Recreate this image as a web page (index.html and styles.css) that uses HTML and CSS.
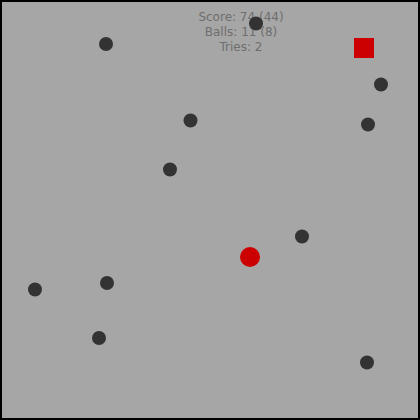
FILE: index.html
```html
<!DOCTYPE html>
<html lang="en">

<head>
  <meta charset="UTF-8" />
  <title>Balls</title>
  <link rel="stylesheet" href="styles.css">
</head>

<body>
  <div class="board">
    <svg class="field" width="416" height="416" viewBox="2 2 416 416">
      <g class="hud">
        <text x="241" y="21">Score: 74 (44)</text>
        <text x="241" y="36">Balls: 11 (8)</text>
        <text x="241" y="51">Tries: 2</text>
      </g>
      <g class="balls">
        <circle cx="256" cy="23.5" r="7" />
        <circle cx="106" cy="44" r="7" />
        <circle cx="381" cy="84.5" r="7" />
        <circle cx="368" cy="124.5" r="7" />
        <circle cx="190.5" cy="120.5" r="7" />
        <circle cx="170" cy="169.5" r="7" />
        <circle cx="302" cy="236.5" r="7" />
        <circle cx="107" cy="283" r="7" />
        <circle cx="35" cy="289.5" r="7" />
        <circle cx="99" cy="338" r="7" />
        <circle cx="367" cy="362.5" r="7" />
      </g>
      <rect class="goal" x="354" y="38" width="20" height="20" />
      <circle class="player" cx="250" cy="257" r="10" />
    </svg>
  </div>
</body>

</html>
```

FILE: styles.css
```css
body {
  margin: 0;
  background: #ffffff;
}

.board {
  width: 416px;
  height: 416px;
  border: 2px solid #000000;
  background: #a6a6a6;
}

.field {
  display: block;
}

.hud text {
  font-family: "DejaVu Sans", sans-serif;
  font-size: 12px;
  fill: #6e6e6e;
  text-anchor: middle;
}

.balls circle {
  fill: #333333;
}

.goal {
  fill: #cc0000;
}

.player {
  fill: #cc0000;
}
```
